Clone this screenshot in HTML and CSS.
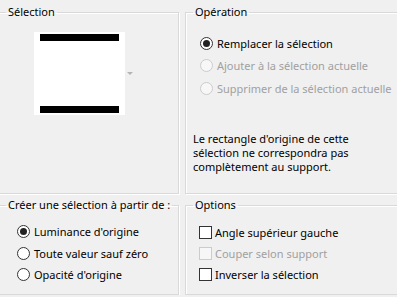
FILE: index.html
```html
<!DOCTYPE html>
<html lang="fr">
<head>
    <meta charset="UTF-8">
    <title>Sélection depuis un masque</title>
    <link rel="stylesheet" href="styles.css">
</head>
<body>
    <div class="dialog">
        <fieldset class="group group-left preview-group">
            <legend>Sélection</legend>
            <div class="preview-row">
                <div class="preview">
                    <div class="bar"></div>
                    <div class="bar"></div>
                </div>
                <span class="drop-arrow"></span>
            </div>
        </fieldset>

        <fieldset class="group group-right">
            <legend>Opération</legend>
            <div class="options op-list">
                <label class="option"><span class="radio checked"></span>Remplacer la sélection</label>
                <label class="option disabled"><span class="radio"></span>Ajouter à la sélection actuelle</label>
                <label class="option disabled"><span class="radio"></span>Supprimer de la sélection actuelle</label>
            </div>
            <p class="note">Le rectangle d'origine de cette sélection ne correspondra pas complètement au support.</p>
        </fieldset>

        <fieldset class="group group-left">
            <legend>Créer une sélection à partir de :</legend>
            <div class="options source-list">
                <label class="option"><span class="radio checked"></span>Luminance d'origine</label>
                <label class="option"><span class="radio"></span>Toute valeur sauf zéro</label>
                <label class="option"><span class="radio"></span>Opacité d'origine</label>
            </div>
        </fieldset>

        <fieldset class="group group-right">
            <legend>Options</legend>
            <div class="options check-list">
                <label class="option"><span class="check"></span>Angle supérieur gauche</label>
                <label class="option disabled"><span class="check"></span>Couper selon support</label>
                <label class="option"><span class="check"></span>Inverser la sélection</label>
            </div>
        </fieldset>
    </div>
</body>
</html>
```

FILE: styles.css
```css
* {
    margin: 0;
    padding: 0;
    box-sizing: border-box;
}

html, body {
    background-color: #f0f0f0;
    color: #000;
    font-family: 'Segoe UI', 'Noto Sans', sans-serif;
    font-size: 11px;
    overflow: hidden;
}

.dialog {
    display: grid;
    grid-template-columns: 189px 1fr;
    grid-template-rows: 190px 98px;
    column-gap: 6px;
    row-gap: 3px;
    width: 430px;
    margin-left: -10px;
    padding-top: 4px;
}

.group {
    border: 1px solid #d9d9d9;
    box-shadow: inset 1px 1px 0 #fff, 1px 1px 0 #fff;
    min-width: 0;
}

.group legend {
    line-height: 16px;
    padding: 0 2px;
    white-space: nowrap;
}

.group-left legend {
    margin-left: 15px;
}

.group-right legend {
    margin-left: 7px;
}

/* preview */
.preview-row {
    display: flex;
    align-items: center;
    margin: 12px 0 0 43px;
}

.preview {
    width: 91px;
    height: 83px;
    background-color: #fff;
    padding: 2px 6px;
    display: flex;
    flex-direction: column;
    justify-content: space-between;
}

.preview .bar {
    height: 7px;
    background-color: #000;
}

.drop-arrow {
    margin-left: 2px;
    border-left: 3px solid transparent;
    border-right: 3px solid transparent;
    border-top: 3px solid #b4b4b4;
}

/* radio / check lists */
.options {
    display: flex;
    flex-direction: column;
}

.option {
    display: flex;
    align-items: center;
    gap: 4px;
    height: 22.5px;
    white-space: nowrap;
}

.option.disabled {
    color: #a0a0a0;
}

.op-list {
    margin: 12px 0 0 14px;
}

.source-list {
    margin: 8px 0 0 26px;
}

.source-list .option {
    height: 21.5px;
}

.check-list {
    margin: 9px 0 0 13px;
}

.check-list .option {
    height: 21px;
    gap: 3px;
}

.radio {
    width: 13px;
    height: 13px;
    border: 1px solid #333;
    border-radius: 50%;
    background-color: #fff;
    display: flex;
    align-items: center;
    justify-content: center;
}

.radio.checked::after {
    content: '';
    width: 7px;
    height: 7px;
    border-radius: 50%;
    background-color: #222;
}

.disabled .radio {
    border-color: #cccccc;
    background-color: #f7f7f7;
}

.check {
    width: 13px;
    height: 13px;
    border: 1px solid #333;
    background-color: #fff;
}

.disabled .check {
    border-color: #cccccc;
    background-color: #f7f7f7;
}

.note {
    margin: 32px 0 0 7px;
    line-height: 14px;
    width: 166px;
}
```
